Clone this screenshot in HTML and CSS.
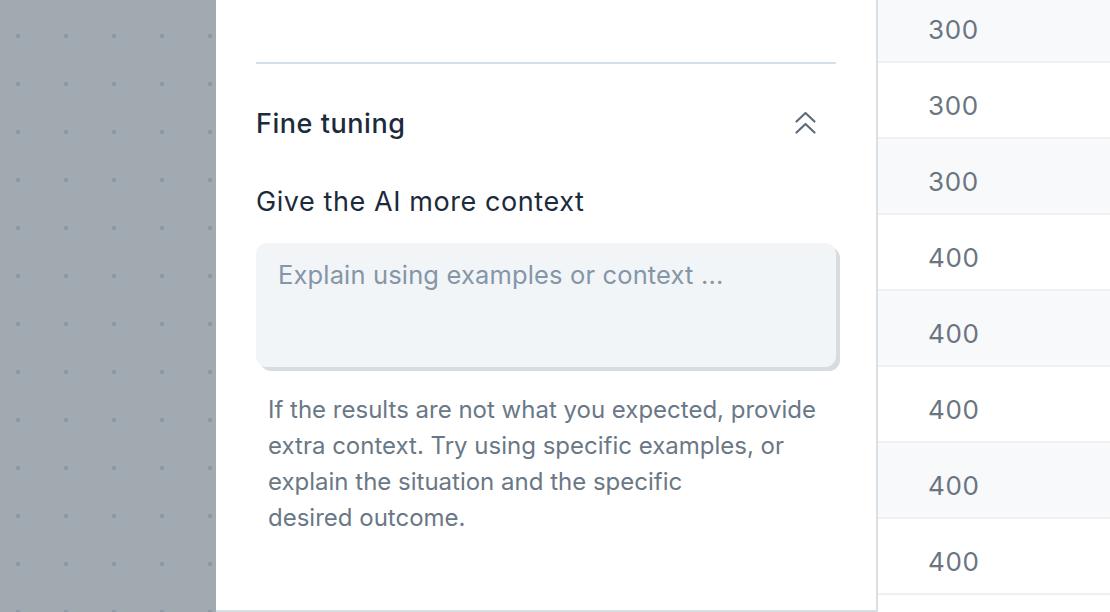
FILE: index.html
```html
<!DOCTYPE html>
<html>
<head>
<meta charset="utf-8">
<link rel="stylesheet" href="styles.css">
</head>
<body>
<div class="page">
  <div class="backdrop"></div>
  <div class="panel">
    <div class="divider"></div>
    <div class="section-head">
      <h2 class="section-title">Fine tuning</h2>
      <svg class="chevrons" viewBox="0 0 24 24" width="24" height="24" fill="none" stroke="currentColor" stroke-width="2.2" stroke-linecap="round" stroke-linejoin="round">
        <polyline points="2.5 10.5 11.5 2 20.5 10.5"></polyline>
        <polyline points="2.5 21.5 11.5 13 20.5 21.5"></polyline>
      </svg>
    </div>
    <label class="field-label">Give the AI more context</label>
    <div class="textarea">Explain using examples or context ...</div>
    <p class="help">If the results are not what you expected, provide extra context. Try using specific examples, or explain the situation and the specific<br>desired outcome.</p>
  </div>
  <div class="table">
    <div class="row alt">300</div>
    <div class="row">300</div>
    <div class="row alt">300</div>
    <div class="row">400</div>
    <div class="row alt">400</div>
    <div class="row">400</div>
    <div class="row alt">400</div>
    <div class="row">400</div>
  </div>
</div>
</body>
</html>
```
FILE: styles.css
```css
html, body {
  margin: 0;
  padding: 0;
  width: 1110px;
  height: 612px;
  overflow: hidden;
  background: #ffffff;
  font-family: Inter, "Noto Sans", sans-serif;
}

.page {
  display: flex;
  height: 612px;
}

.backdrop {
  width: 216px;
  flex: none;
  background-color: #a1a9b1;
  background-image: radial-gradient(circle at center, #8e98a2 0, #8e98a2 2px, transparent 2.6px);
  background-size: 48px 48px;
  background-position: -6px 12px;
}

.panel {
  width: 580px;
  flex: none;
  height: 610px;
  padding: 0 40px;
  background: #ffffff;
  border-right: 2px solid #dadfe4;
  border-bottom: 2px solid #dadfe4;
  display: flex;
  flex-direction: column;
}

.divider {
  margin-top: 62px;
  height: 2px;
  background: #d6dfe8;
}

.section-head {
  display: flex;
  align-items: center;
  justify-content: space-between;
  margin-top: 42px;
  height: 34px;
}

.section-title {
  margin: 0;
  font-size: 27px;
  font-weight: 500;
  letter-spacing: 0.55px;
  color: #1c2b3b;
}

.chevrons {
  color: #5d6c7b;
  width: 24px;
  height: 24px;
  margin-right: 18px;
  margin-top: 0;
}

.field-label {
  margin-top: 45px;
  font-size: 27px;
  line-height: 34px;
  letter-spacing: 0.58px;
  color: #1c2b3b;
}

.textarea {
  margin-top: 24px;
  height: 124px;
  box-sizing: border-box;
  padding: 16px 22px;
  background: #f2f5f8;
  border-radius: 11px;
  box-shadow: 4px 4px 0 #d7dce1;
  font-size: 25.5px;
  line-height: 32px;
  letter-spacing: 0.15px;
  color: #8596a7;
}

.help {
  margin: 25px 0 0 0;
  padding-left: 12px;
  font-size: 24px;
  line-height: 36px;
  color: #6a7886;
}

.table {
  flex: 1;
  display: flex;
  flex-direction: column;
  margin-top: -13px;
}

.row {
  flex: none;
  height: 47px;
  padding-top: 27px;
  line-height: 32px;
  border-bottom: 2px solid #eef0f3;
  padding-left: 50px;
  font-size: 26px;
  letter-spacing: 0.6px;
  color: #6b7580;
  background: #ffffff;
}

.row.alt {
  background: #f8f9fb;
}
```
